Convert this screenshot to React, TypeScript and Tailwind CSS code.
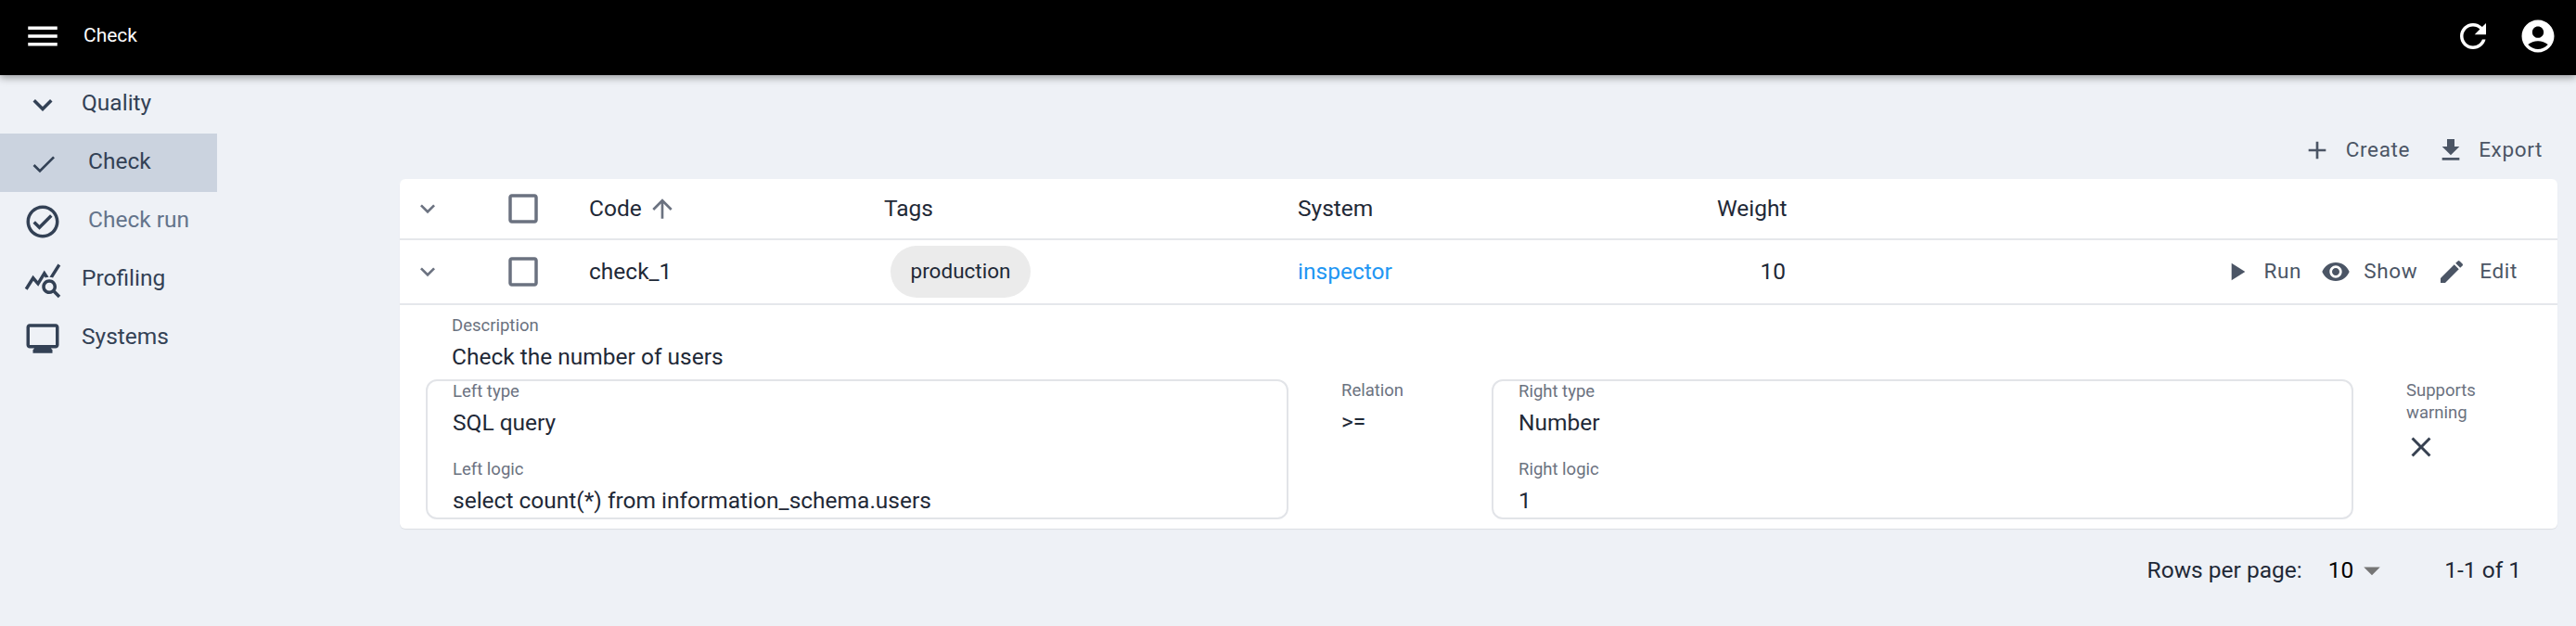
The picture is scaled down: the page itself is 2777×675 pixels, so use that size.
import type { ReactNode } from 'react';

const paths = {
  menu: 'M3 18h18v-2H3v2zm0-5h18v-2H3v2zm0-7v2h18V6H3z',
  expand: 'M16.59 8.59 12 13.17 7.41 8.59 6 10l6 6 6-6z',
  done: 'M9 16.17 4.83 12l-1.42 1.41L9 19 21 7l-1.41-1.41z',
  circleCheck: 'M12 2C6.48 2 2 6.48 2 12s4.48 10 10 10 10-4.48 10-10S17.52 2 12 2zm0 18c-4.41 0-8-3.59-8-8s3.59-8 8-8 8 3.59 8 8-3.59 8-8 8zm4.59-12.42L10 14.17l-2.59-2.58L6 13l4 4 8-8z',
  queryStats: 'M19.88 18.47c.44-.7.7-1.51.7-2.39 0-2.49-2.01-4.5-4.5-4.5s-4.5 2.01-4.5 4.5 2.01 4.5 4.49 4.5c.88 0 1.7-.26 2.39-.7L21.58 23 23 21.58l-3.12-3.11zm-3.8.11c-1.38 0-2.5-1.12-2.5-2.5s1.12-2.5 2.5-2.5 2.5 1.12 2.5 2.5-1.12 2.5-2.5 2.5zm-.36-8.5c-.74.02-1.45.18-2.1.45l-.55-.83-3.8 6.18-3.01-3.52-3.63 5.81L1 17l5-8 3 3.5L13 6l2.72 4.08zm2.59.5c-.64-.28-1.33-.45-2.05-.49L21.38 2 23 3.18l-4.69 7.4z',
  monitor: 'M20 3H4c-1.1 0-2 .9-2 2v11c0 1.1.9 2 2 2h3l-1 1v2h12v-2l-1-1h3c1.1 0 2-.9 2-2V5c0-1.1-.9-2-2-2zm0 13H4V5h16v11z',
  refresh: 'M17.65 6.35C16.2 4.9 14.21 4 12 4c-4.42 0-7.99 3.58-7.99 8s3.57 8 7.99 8c3.73 0 6.84-2.55 7.73-6h-2.08c-.82 2.33-3.04 4-5.65 4-3.31 0-6-2.69-6-6s2.69-6 6-6c1.66 0 3.14.69 4.22 1.78L13 11h7V4l-2.35 2.35z',
  account: 'M12 2C6.48 2 2 6.48 2 12s4.48 10 10 10 10-4.48 10-10S17.52 2 12 2zm0 4c1.93 0 3.5 1.57 3.5 3.5S13.93 13 12 13s-3.5-1.57-3.5-3.5S10.07 6 12 6zm0 14c-2.03 0-4.43-.82-6.14-2.88C7.55 15.8 9.68 15 12 15s4.45.8 6.14 2.12C16.43 19.18 14.03 20 12 20z',
  add: 'M19 13h-6v6h-2v-6H5v-2h6V5h2v6h6v2z',
  download: 'M19 9h-4V3H9v6H5l7 7 7-7zM5 18v2h14v-2H5z',
  play: 'M8 5v14l11-7z',
  eye: 'M12 4.5C7 4.5 2.73 7.61 1 12c1.73 4.39 6 7.5 11 7.5s9.27-3.11 11-7.5c-1.73-4.39-6-7.5-11-7.5zM12 17c-2.76 0-5-2.24-5-5s2.24-5 5-5 5 2.24 5 5-2.24 5-5 5zm0-8c-1.66 0-3 1.34-3 3s1.34 3 3 3 3-1.34 3-3-1.34-3-3-3z',
  edit: 'M3 17.25V21h3.75L17.81 9.94l-3.75-3.75L3 17.25zM20.71 7.04c.39-.39.39-1.02 0-1.41l-2.34-2.34a.9959.9959 0 0 0-1.41 0l-1.83 1.83 3.75 3.75 1.83-1.83z',
  close: 'M19 6.41 17.59 5 12 10.59 6.41 5 5 6.41 10.59 12 5 17.59 6.41 19 12 13.41 17.59 19 19 17.59 13.41 12z',
  box: 'M19 5v14H5V5h14m0-2H5c-1.1 0-2 .9-2 2v14c0 1.1.9 2 2 2h14c1.1 0 2-.9 2-2V5c0-1.1-.9-2-2-2z',
  up: 'M4 12l1.41 1.41L11 7.83V20h2V7.83l5.58 5.59L20 12l-8-8-8 8z',
  drop: 'M7 10l5 5 5-5z',
};

function Icon({ d, className }: { d: string; className: string }) {
  return (
    <svg viewBox="0 0 24 24" fill="currentColor" className={`shrink-0 ${className}`}>
      <path d={d} />
    </svg>
  );
}

function NavItem({ icon, iconClass, label, className, textClass }: { icon: string; iconClass?: string; label: string; className?: string; textClass: string }) {
  return (
    <div className={`flex h-[63px] items-center pl-[25px] ${className ?? ''}`}>
      <Icon d={icon} className={iconClass ?? 'h-[42px] w-[42px]'} />
      <span className={`mt-[-2px] text-[24.5px] ${textClass}`}>{label}</span>
    </div>
  );
}

function Action({ icon, label, iconClass, className }: { icon: string; label: string; iconClass: string; className?: string }) {
  return (
    <div className={`flex items-center text-[22.5px] tracking-[0.65px] text-[#4b5565] ${className ?? ''}`}>
      <Icon d={icon} className={iconClass} />
      <span>{label}</span>
    </div>
  );
}

function Field({ label, children, className }: { label: string; children: ReactNode; className?: string }) {
  return (
    <div className={className}>
      <div className="h-[26px] text-[18.5px] leading-[26px] text-[#6b7280]">{label}</div>
      <div className="mt-[4px] text-[24.5px] leading-[34px] text-[#1f2937]">{children}</div>
    </div>
  );
}

function Box({ typeLabel, typeValue, logicLabel, logicValue, className }: { typeLabel: string; typeValue: string; logicLabel: string; logicValue: string; className: string }) {
  return (
    <div className={`h-[151px] shrink-0 rounded-[12px] border-2 border-[#e2e4e8] pl-[27px] ${className}`}>
      <Field label={typeLabel} className="mt-[-2px]">{typeValue}</Field>
      <Field label={logicLabel} className="mt-[20px]">{logicValue}</Field>
    </div>
  );
}

export default function App() {
  return (
    <div className="flex h-[675px] flex-col overflow-hidden bg-[#eef1f6] font-['Roboto',sans-serif]">
      <header className="relative z-10 flex h-[81px] shrink-0 items-center bg-black pl-[25px] pr-[20px] text-white shadow-[0_3px_8px_rgba(0,0,0,0.35)]">
        <Icon d={paths.menu} className="mt-[-4px] h-[42px] w-[42px]" />
        <h1 className="ml-[23px] mt-[-4px] flex-1 text-[21px]">Check</h1>
        <Icon d={paths.refresh} className="mt-[-4px] h-[42px] w-[42px]" />
        <Icon d={paths.account} className="ml-[28px] mt-[-4px] h-[42px] w-[42px]" />
      </header>

      <div className="flex flex-1">
        <nav className="w-[234px] shrink-0 text-[#334155]">
          <NavItem icon={paths.expand} label="Quality" textClass="ml-[21px]" />
          <NavItem icon={paths.done} iconClass="mx-[6px] mt-[3px] h-[32px] w-[32px]" label="Check" className="bg-[#cbd3df]" textClass="ml-[26px]" />
          <NavItem icon={paths.circleCheck} label="Check run" textClass="ml-[28px] text-[#64748b]" />
          <NavItem icon={paths.queryStats} label="Profiling" textClass="ml-[21px]" />
          <NavItem icon={paths.monitor} label="Systems" textClass="ml-[21px]" />
        </nav>

        <main className="ml-[197px] w-[2326px]">
          <div className="flex h-[112px] items-center justify-end pr-[16px] pt-[50px]">
            <Action icon={paths.add} label="Create" iconClass="mr-[15px] h-[32px] w-[32px]" />
            <Action icon={paths.download} label="Export" iconClass="mr-[14px] h-[32px] w-[32px]" className="ml-[28px]" />
          </div>

          <section className="rounded-[6px] bg-white shadow-[0_1px_1px_rgba(0,0,0,0.08)]">
            <div className="grid h-[66px] grid-cols-[204px_318px_446px_452px_1fr] items-center border-b-2 border-[#e5e7eb] text-[24.5px] text-[#1f2937]">
              <div className="flex items-center">
                <Icon d={paths.expand} className="ml-[14px] h-[32px] w-[32px] text-[#6b7280]" />
                <Icon d={paths.box} className="ml-[66px] h-[42px] w-[42px] text-[#6b7280]" />
              </div>
              <div className="flex items-center">
                Code
                <Icon d={paths.up} className="ml-[6px] h-[32px] w-[32px] text-[#6b7280]" />
              </div>
              <div>Tags</div>
              <div>System</div>
              <div>Weight</div>
            </div>

            <div className="grid h-[70px] grid-cols-[204px_318px_446px_452px_74px_1fr] items-center border-b-2 border-[#e5e7eb] text-[24.5px] text-[#1f2937]">
              <div className="flex items-center">
                <Icon d={paths.expand} className="ml-[14px] h-[32px] w-[32px] text-[#6b7280]" />
                <Icon d={paths.box} className="ml-[66px] h-[42px] w-[42px] text-[#6b7280]" />
              </div>
              <div>check_1</div>
              <div>
                <span className="ml-[7px] inline-flex h-[56px] w-[151px] items-center justify-center rounded-full bg-[#ebebeb] text-[22.5px]">production</span>
              </div>
              <div className="text-[#2196f3]">inspector</div>
              <div className="text-right">10</div>
              <div className="flex items-center justify-end pr-[43px]">
                <Action icon={paths.play} label="Run" iconClass="mr-[14px] h-[32px] w-[32px]" />
                <Action icon={paths.eye} label="Show" iconClass="mr-[14px] h-[32px] w-[32px]" className="ml-[21px]" />
                <Action icon={paths.edit} label="Edit" iconClass="mr-[14px] h-[32px] w-[32px]" className="ml-[21px]" />
              </div>
            </div>

            <div className="h-[241px] px-[28px]">
              <div className="h-[80px] pl-[28px] pt-[9px]">
                <Field label="Description">Check the number of users</Field>
              </div>
              <div className="flex items-start">
                <Box typeLabel="Left type" typeValue="SQL query" logicLabel="Left logic" logicValue="select count(*) from information_schema.users" className="w-[930px]" />
                <div className="ml-[57px] w-[162px]">
                  <Field label="Relation" className="mt-[-1px]">{'>='}</Field>
                </div>
                <Box typeLabel="Right type" typeValue="Number" logicLabel="Right logic" logicValue="1" className="w-[929px]" />
                <div className="ml-[57px] w-[100px]">
                  <div className="text-[18.5px] leading-[24px] text-[#6b7280]">Supports<br />warning</div>
                  <Icon d={paths.close} className="ml-[-2px] mt-[7px] h-[36px] w-[36px] text-[#374151]" />
                </div>
              </div>
            </div>
          </section>

          <div className="flex items-center justify-end pr-[39px] pt-[24px] text-[24.5px] text-[#1f2937]">
            <span>Rows per page:</span>
            <span className="ml-[28px] text-black">10</span>
            <Icon d={paths.drop} className="ml-[-1px] h-[42px] w-[42px] text-[#757575]" />
            <span className="ml-[57px]">1-1 of 1</span>
          </div>
        </main>
      </div>
    </div>
  );
}
